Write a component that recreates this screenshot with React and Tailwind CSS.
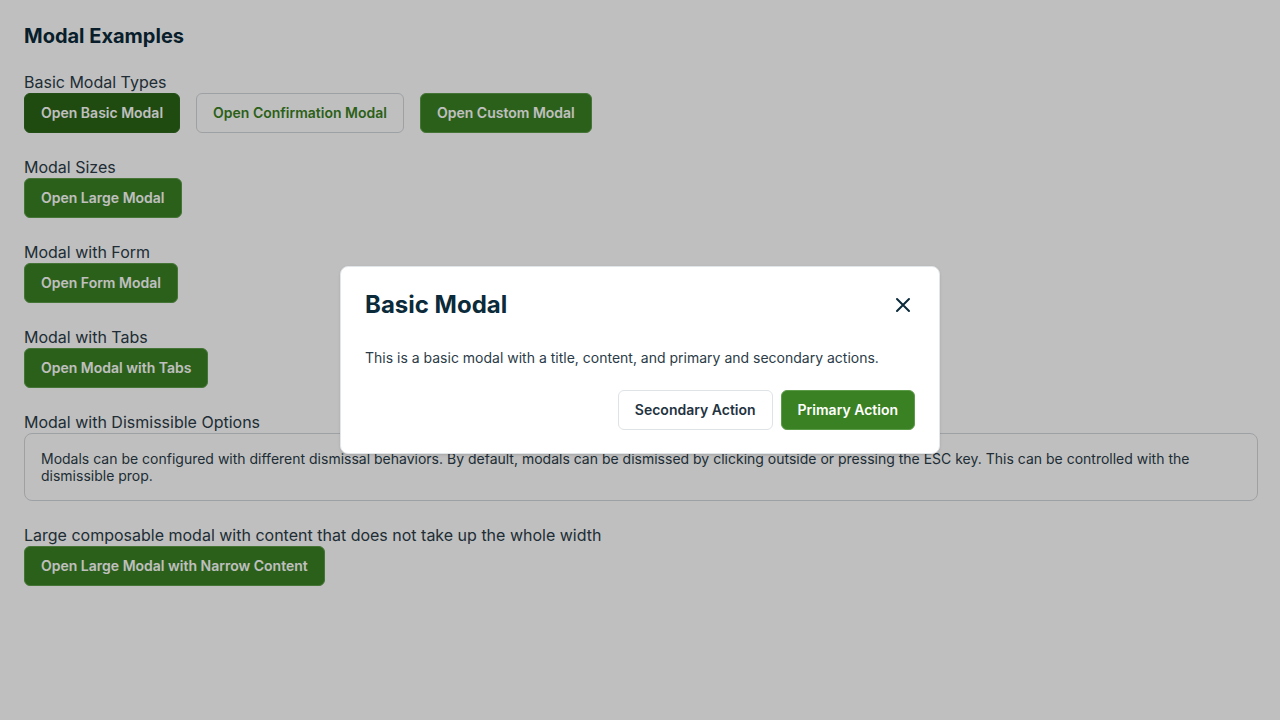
const font = { fontFamily: "Inter, 'Noto Sans', sans-serif" };

const Primary = ({ children, dark }) => (
  <button
    className={
      dark
        ? "h-10 rounded-md border border-[#2f6a1e] bg-[#2a6316] px-4 text-sm font-semibold text-white"
        : "h-10 rounded-md border border-[#5c9c48] bg-[#3a8123] px-4 text-sm font-semibold text-white"
    }
  >
    {children}
  </button>
);

const Section = ({ label, children }) => (
  <div className="mt-[23px] first:mt-0">
    <div className="text-base leading-[22px] text-[#2b3c48]">{label}</div>
    {children}
  </div>
);

export default function App() {
  return (
    <div style={font} className="relative h-[720px] w-[1280px] overflow-hidden bg-white">
      <div className="pl-6 pr-[22px] pt-6">
        <h1 className="text-xl font-bold leading-6 text-[#0b2a3a]">Modal Examples</h1>
        <div className="mt-[23px] flex flex-col">
          <Section label="Basic Modal Types">
            <div className="flex gap-4">
              <Primary dark>Open Basic Modal</Primary>
              <button className="h-10 rounded-md border border-[#d3d7db] px-4 text-sm font-semibold text-[#3a8123]">
                Open Confirmation Modal
              </button>
              <Primary>Open Custom Modal</Primary>
            </div>
          </Section>
          <Section label="Modal Sizes">
            <Primary>Open Large Modal</Primary>
          </Section>
          <Section label="Modal with Form">
            <Primary>Open Form Modal</Primary>
          </Section>
          <Section label="Modal with Tabs">
            <Primary>Open Modal with Tabs</Primary>
          </Section>
          <Section label="Modal with Dismissible Options">
            <div className="rounded-lg border border-[#d3d7db] px-4 py-4 text-sm leading-[17px] text-[#2b3c48]">
              Modals can be configured with different dismissal behaviors. By default, modals can be dismissed by clicking outside or pressing the ESC key. This can be controlled with the dismissible prop.
            </div>
          </Section>
          <Section label="Large composable modal with content that does not take up the whole width">
            <Primary>Open Large Modal with Narrow Content</Primary>
          </Section>
        </div>
      </div>

      <div className="absolute inset-0 flex items-center justify-center bg-black/25">
        <div className="w-[600px] rounded-lg border border-[#e3e6e8] bg-white px-6 pb-[23px] pt-[22px] shadow-sm">
          <div className="flex items-center justify-between">
            <h2 className="text-2xl font-bold leading-8 text-[#0b2a3a]">Basic Modal</h2>
            <button className="flex h-6 w-6 items-center justify-center text-[#0b2a3a]">
              <svg width="16" height="16" viewBox="0 0 16 16" fill="none" stroke="currentColor" strokeWidth="2" strokeLinecap="round">
                <path d="M2 2l12 12M14 2L2 14" />
              </svg>
            </button>
          </div>
          <p className="mt-[27px] text-sm leading-5 text-[#2b3c48]">
            This is a basic modal with a title, content, and primary and secondary actions.
          </p>
          <div className="mt-[22px] flex justify-end gap-2">
            <button className="h-10 rounded-md border border-[#dfe3e6] bg-white px-4 text-sm font-semibold text-[#1f3341]">
              Secondary Action
            </button>
            <Primary>Primary Action</Primary>
          </div>
        </div>
      </div>
    </div>
  );
}
